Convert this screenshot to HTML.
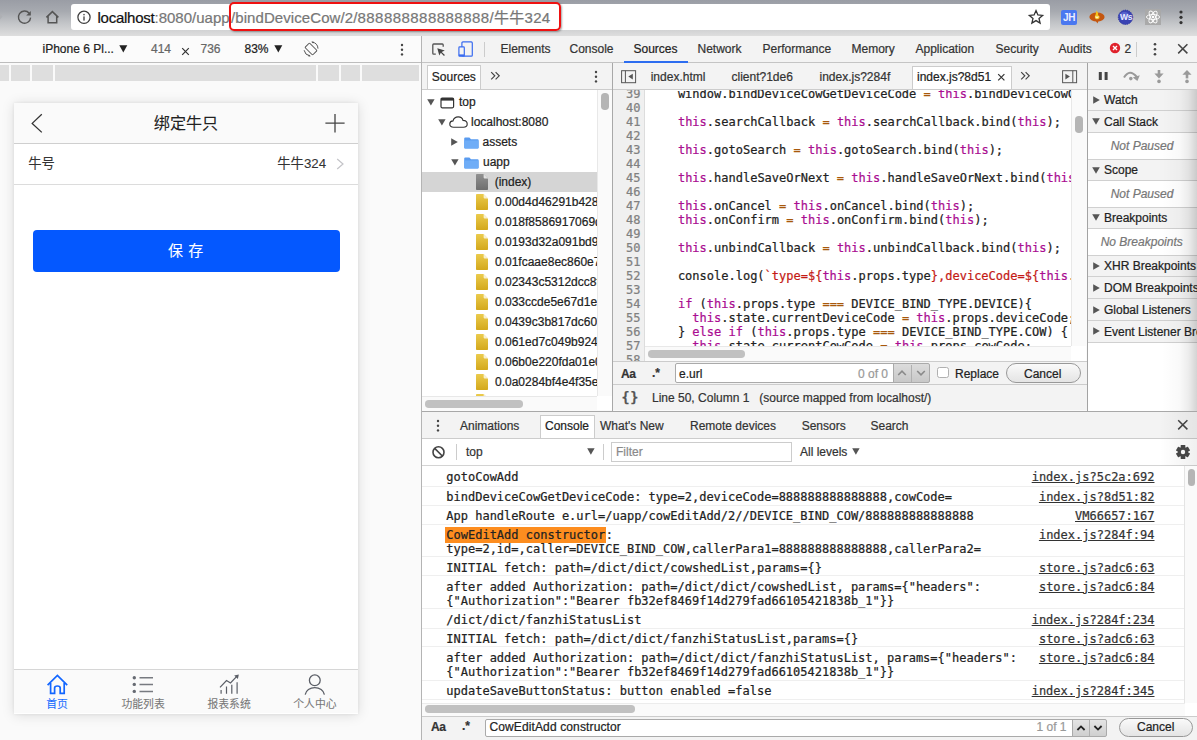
<!DOCTYPE html>
<html lang="zh">
<head>
<meta charset="utf-8">
<title>bindDeviceCow</title>
<style>
*{box-sizing:border-box;margin:0;padding:0}
html,body{width:1197px;height:740px;overflow:hidden;background:#fafafa}
body{position:relative;font-family:"Liberation Sans","Noto Sans CJK SC",sans-serif;font-size:13px;color:#222;-webkit-font-smoothing:antialiased;-webkit-text-stroke:.22px}
.a{position:absolute}
.t{position:absolute;white-space:nowrap;line-height:1}
.m{font-family:"DejaVu Sans Mono","Liberation Mono",monospace;font-size:12px}
svg{position:absolute;overflow:visible}
/* top chrome */
#chrome{left:0;top:0;width:1197px;height:36.6px;background:linear-gradient(#9a9da5 0,#a7aab0 32%,#c4c6c9 66%,#dedede 100%);border-bottom:1.2px solid #a8a8a8}
#url{left:71px;top:4px;width:979px;height:26px;background:#fff;border-radius:3px}
#redbox{left:229px;top:2px;width:332px;height:29px;border:2px solid #ee1111;border-radius:5px;box-shadow:1px 1px 2px rgba(0,0,0,.35)}
/* device toolbar */
#devbar{left:0;top:36px;width:421px;height:26.8px;background:#fbfbfb;border-bottom:1px solid #bdbdbd}
#dtbar{left:421.5px;top:36px;width:776px;height:26.8px;background:#f3f3f3;border-bottom:1px solid #c4c4c4}
#vsplit{left:420.8px;top:36px;width:1px;height:704px;background:#b4b4b4}
.cl{position:absolute;left:36.5px;margin:0;font-family:"DejaVu Sans Mono","Liberation Mono",monospace;font-size:12px;line-height:14px;color:#222;white-space:pre}
.cl b{font-weight:normal}
.k{color:#aa0d91}.o{color:#a8580c}.s{color:#c41a16}
.cm{position:absolute;margin:0;font-family:"DejaVu Sans Mono","Liberation Mono",monospace;font-size:12px;line-height:14px;color:#222;white-space:pre}
.cm b{font-weight:normal}
.hl{background:#fd8d1f;padding:.8px 0.5px 1.2px 1px;margin-left:-1px}
.lk{color:#333;text-decoration:underline}
</style>
</head>
<body>
<div id="chrome" class="a"></div>
<div id="url" class="a"></div>
<div id="devbar" class="a"></div>
<div id="dtbar" class="a"></div>
<div id="vsplit" class="a"></div>
<!-- top chrome icons -->
<svg class="a" style="left:0;top:0" width="70" height="36" viewBox="0 0 70 36">
<path d="M0 13.5 L2.6 16.6 L0 19.5 Z" fill="#aeb0b4"/>
<path d="M29.2 13.2 A6.1 6.1 0 1 0 30.6 17.6" fill="none" stroke="#555" stroke-width="1.4"/>
<path d="M26.2 15.6 L30.8 15.6 L30.8 11 Z" fill="#555"/>
<path d="M46.4 17.4 L52.4 11.6 L58.4 17.4 M48.1 16.2 V22.8 H56.7 V16.2" fill="none" stroke="#555" stroke-width="1.5"/>
</svg>
<svg class="a" style="left:76px;top:9px" width="16" height="16" viewBox="0 0 16 16">
<circle cx="8" cy="8.3" r="6.1" fill="none" stroke="#3c3c3c" stroke-width="1.25"/>
<rect x="7.35" y="7.4" width="1.3" height="4.2" fill="#3c3c3c"/><rect x="7.35" y="4.9" width="1.3" height="1.4" fill="#3c3c3c"/>
</svg>
<span class="t" style="left:97.5px;top:10px;font-size:15px;color:#111;letter-spacing:-.26px">localhost</span>
<span class="t" style="left:154.5px;top:10px;font-size:15px;color:#777">:8080/uapp</span>
<span class="t" style="left:231px;top:10px;font-size:15px;color:#777;letter-spacing:.08px">/bindDeviceCow/2/</span>
<span class="t" style="left:357.5px;top:10px;font-size:15px;color:#777;letter-spacing:.46px">888888888888888</span>
<span class="t" style="left:489.5px;top:10px;font-size:15px;color:#777;letter-spacing:.3px">/牛牛324</span>
<div id="redbox" class="a"></div>
<!-- star -->
<svg class="a" style="left:1028px;top:9px" width="16" height="16" viewBox="0 0 16 16"><path d="M8 1.6 L9.9 6 L14.6 6.4 L11 9.5 L12.1 14.1 L8 11.6 L3.9 14.1 L5 9.5 L1.4 6.4 L6.1 6 Z" fill="none" stroke="#333" stroke-width="1.3" stroke-linejoin="miter"/></svg>
<!-- extensions -->
<div class="a" style="left:1061px;top:10px;width:16px;height:15px;background:#4a78f0;border-radius:2px"></div>
<span class="t" style="left:1063px;top:12.5px;font-size:10px;font-weight:bold;color:#eef;letter-spacing:-.2px;-webkit-text-stroke:0">JH</span>
<svg class="a" style="left:1088px;top:9px" width="18" height="16" viewBox="0 0 18 16"><ellipse cx="9" cy="8" rx="7.6" ry="4.6" fill="#c4560f"/><path d="M7.5 11.5 L9.5 14.5 L10.5 11.8Z" fill="#c4560f"/><path d="M8.5 1.5 Q11 4 10 6.5 Q12 6 11.5 9 Q10 11 7.8 10 Q6 8.5 7.5 6 Q8 4 8.5 1.5Z" fill="#f5c21a"/><path d="M7.2 6.5 L8.2 8 L9 6.8 L9.8 8 L10.8 6.5 L10.3 9.3 H7.7Z" fill="#fff3c0"/></svg>
<svg class="a" style="left:1117px;top:9px" width="17" height="17" viewBox="0 0 17 17"><circle cx="8.5" cy="8.3" r="7.2" fill="#3a43b3"/><circle cx="8.5" cy="8.3" r="7.2" fill="none" stroke="#2a32a0" stroke-width="1" stroke-dasharray="1.2 1"/><ellipse cx="7.5" cy="6.5" rx="4.5" ry="3.5" fill="#6a78e0" opacity=".6"/></svg>
<span class="t" style="left:1120px;top:13px;font-size:8.5px;font-weight:bold;color:#e8eaff;letter-spacing:-.3px;-webkit-text-stroke:0">Ws</span>
<div class="a" style="left:1145px;top:9px;width:16px;height:16px;background:#a9a9a9"></div>
<svg class="a" style="left:1145px;top:9px" width="16" height="16" viewBox="0 0 16 16"><g fill="none" stroke="#fff" stroke-width=".9"><ellipse cx="8" cy="8" rx="6.6" ry="2.5"/><ellipse cx="8" cy="8" rx="6.6" ry="2.5" transform="rotate(60 8 8)"/><ellipse cx="8" cy="8" rx="6.6" ry="2.5" transform="rotate(120 8 8)"/></g><circle cx="8" cy="8" r="1.3" fill="#fff"/></svg>
<svg class="a" style="left:1177px;top:9px" width="8" height="16" viewBox="0 0 8 16"><circle cx="4" cy="3" r="1.6" fill="#333"/><circle cx="4" cy="8.3" r="1.6" fill="#333"/><circle cx="4" cy="13.6" r="1.6" fill="#333"/></svg>

<!-- device toolbar -->
<span class="t" style="left:42.5px;top:43px;font-size:12px;color:#222">iPhone 6 Pl...</span>
<svg class="a" style="left:119px;top:45px" width="9" height="8" viewBox="0 0 9 8"><path d="M0.3 0.3 H8.3 L4.3 7.4Z" fill="#222"/></svg>
<span class="t" style="left:151px;top:43px;font-size:12px;color:#666">414</span>
<svg class="a" style="left:181px;top:47px" width="9" height="9" viewBox="0 0 9 9"><path d="M1.2 1.2 L7.8 7.8 M7.8 1.2 L1.2 7.8" stroke="#333" stroke-width="1.2" fill="none"/></svg>
<span class="t" style="left:200.5px;top:43px;font-size:12px;color:#666">736</span>
<span class="t" style="left:244.5px;top:43px;font-size:12px;color:#222">83%</span>
<svg class="a" style="left:274px;top:45px" width="9" height="8" viewBox="0 0 9 8"><path d="M0.3 0.3 H8.3 L4.3 7.4Z" fill="#222"/></svg>
<svg class="a" style="left:303.05px;top:40.85px" width="16" height="16" viewBox="-8 -8 16 16"><g fill="none" stroke="#555" stroke-width="1"><rect x="-5.4" y="-3.2" width="10.8" height="6.4" rx=".8" transform="rotate(45)"/><path d="M1.22 -6.89 A7 7 0 0 1 6.99 -0.37"/><path d="M-6.89 1.22 A7 7 0 0 0 -1.22 6.89"/></g><path d="M0.2 -7.2 L2.6 -7.6 L2.2 -5.4Z" fill="#555"/><path d="M-0.2 7.2 L-2.6 7.6 L-2.2 5.4Z" fill="#555"/></svg>
<svg class="a" style="left:399px;top:43px" width="6" height="14" viewBox="0 0 6 14"><circle cx="3" cy="2" r="1.2" fill="#444"/><circle cx="3" cy="6.7" r="1.2" fill="#444"/><circle cx="3" cy="11.4" r="1.2" fill="#444"/></svg>
<!-- ruler -->
<div class="a" style="left:0;top:65px;width:419px;height:15.7px;background:#dedede"></div>
<div class="a" style="left:9px;top:65px;width:2px;height:15.7px;background:#fafafa"></div>
<div class="a" style="left:30px;top:65px;width:2px;height:15.7px;background:#fafafa"></div>
<div class="a" style="left:53px;top:65px;width:2px;height:15.7px;background:#fafafa"></div>
<div class="a" style="left:316px;top:65px;width:2px;height:15.7px;background:#fafafa"></div>
<div class="a" style="left:339px;top:65px;width:2px;height:15.7px;background:#fafafa"></div>
<div class="a" style="left:360px;top:65px;width:2px;height:15.7px;background:#fafafa"></div>
<!-- devtools main toolbar -->
<svg class="a" style="left:431px;top:42px" width="16" height="16" viewBox="0 0 16 16"><path d="M12.2 4.8 V2.9 Q12.2 2 11.3 2 H2.7 Q1.8 2 1.8 2.9 V11.3 Q1.8 12.2 2.7 12.2 H4.8" fill="none" stroke="#555" stroke-width="1.3"/><path d="M6.3 6.3 L13.8 8.5 L10.7 9.9 L13.9 13.1 L13 14 L9.8 10.8 L8.3 13.6 Z" fill="#444"/></svg>
<svg class="a" style="left:457px;top:40px" width="17" height="18" viewBox="0 0 17 18"><rect x="4.9" y="1.9" width="10.4" height="14.3" rx="1" fill="none" stroke="#3a6cf0" stroke-width="1.2"/><rect x="1.9" y="6.9" width="5.4" height="9.3" rx=".8" fill="#f3f3f3" stroke="#3a6cf0" stroke-width="1.2"/><rect x="1.9" y="14.4" width="5.4" height="1.8" fill="#3a6cf0"/></svg>
<div class="a" style="left:484px;top:41.5px;width:1px;height:15.5px;background:#ccc"></div>
<span class="t" style="left:500.5px;top:43px;font-size:12px;color:#333">Elements</span>
<span class="t" style="left:569.5px;top:43px;font-size:12px;color:#333">Console</span>
<span class="t" style="left:633.5px;top:43px;font-size:12px;color:#222">Sources</span>
<div class="a" style="left:624px;top:61px;width:64px;height:2.2px;background:#2d6df0"></div>
<span class="t" style="left:697.5px;top:43px;font-size:12px;color:#333">Network</span>
<span class="t" style="left:762.5px;top:43px;font-size:12px;color:#333">Performance</span>
<span class="t" style="left:851.5px;top:43px;font-size:12px;color:#333">Memory</span>
<span class="t" style="left:915.5px;top:43px;font-size:12px;color:#333">Application</span>
<span class="t" style="left:995.5px;top:43px;font-size:12px;color:#333">Security</span>
<span class="t" style="left:1058.5px;top:43px;font-size:12px;color:#333">Audits</span>
<svg class="a" style="left:1109px;top:42px" width="12" height="12" viewBox="0 0 12 12"><circle cx="6" cy="6" r="5.2" fill="#e0222c"/><path d="M4 4 L8 8 M8 4 L4 8" stroke="#fff" stroke-width="1.4"/></svg>
<span class="t" style="left:1124.5px;top:43px;font-size:12px;color:#333">2</span>
<div class="a" style="left:1136px;top:42px;width:1px;height:15px;background:#ccc"></div>
<svg class="a" style="left:1152px;top:42px" width="6" height="15" viewBox="0 0 6 15"><circle cx="3" cy="2.2" r="1.3" fill="#444"/><circle cx="3" cy="7.2" r="1.3" fill="#444"/><circle cx="3" cy="12.2" r="1.3" fill="#444"/></svg>
<svg class="a" style="left:1177px;top:43.4px" width="12" height="12" viewBox="0 0 12 12"><path d="M1.2 1.2 L10.4 10.4 M10.4 1.2 L1.2 10.4" stroke="#444" stroke-width="1.5" fill="none"/></svg>

<!-- phone -->
<div class="a" style="left:14.2px;top:102.5px;width:343.5px;height:611px;background:#fff;box-shadow:0 1px 12px rgba(0,0,0,.13),0 0 3px rgba(0,0,0,.07)"></div>
<div class="a" style="left:14.2px;top:102.5px;width:343.5px;height:41px;background:#fafafa;border-bottom:1px solid #cfcfcf"></div>
<svg class="a" style="left:30px;top:112px" width="14" height="22" viewBox="0 0 14 22"><path d="M11.8 2.2 L2.2 11.4 L11.8 20.4" fill="none" stroke="#333" stroke-width="1.3"/></svg>
<span class="t" style="-webkit-text-stroke:.08px;left:153.8px;top:114.5px;font-size:16.1px;color:#222;font-family:'Liberation Sans','Noto Sans CJK SC',sans-serif">绑定牛只</span>
<svg class="a" style="left:325px;top:113px" width="20" height="20" viewBox="0 0 20 20"><path d="M0.4 10.2 H19.6 M10 1 V19.6" fill="none" stroke="#444" stroke-width="1.3"/></svg>
<span class="t" style="-webkit-text-stroke:.08px;left:28.3px;top:157px;font-size:13.3px;color:#333">牛号</span>
<span class="t" style="-webkit-text-stroke:.08px;left:277.3px;top:157px;font-size:13.3px;color:#333">牛牛324</span>
<svg class="a" style="left:336px;top:158px" width="9" height="12" viewBox="0 0 9 12"><path d="M1.2 1 L7 6 L1.2 11" fill="none" stroke="#c4c4c8" stroke-width="1.2"/></svg>
<div class="a" style="left:14.2px;top:183.5px;width:343.5px;height:1px;background:#dcdcdc"></div>
<div class="a" style="left:32.5px;top:230px;width:307px;height:41.5px;background:#0458ff;border-radius:4px"></div>
<span class="t" style="-webkit-text-stroke:.08px;left:168px;top:243px;font-size:15px;color:#fff;word-spacing:1px">保 存</span>
<!-- tabbar -->
<div class="a" style="left:14.2px;top:668.8px;width:343.5px;height:44.7px;background:#fafafa;border-top:1px solid #d6d6d6"></div>
<svg class="a" style="left:45px;top:672px" width="25" height="24" viewBox="0 0 25 24"><path d="M2.6 13.2 L12.4 3.4 L22.2 13.2 M5.6 11 V21.4 H9.6 V16 Q9.6 14 12.4 14 Q15.2 14 15.2 16 V21.4 H19.2 V11" fill="none" stroke="#1266ff" stroke-width="1.7" stroke-linejoin="miter"/></svg>
<span class="t" style="-webkit-text-stroke:.08px;left:46.3px;top:698.5px;font-size:10.8px;color:#1a6dff">首页</span>
<svg class="a" style="left:131px;top:674px" width="24" height="20" viewBox="0 0 24 20"><g fill="#666a72"><circle cx="3.3" cy="3.7" r="1.7"/><circle cx="3.3" cy="10.4" r="1.7"/><circle cx="3.3" cy="17.4" r="1.7"/></g><path d="M8.5 3.7 H22 M8.5 10.4 H22 M8.5 17.4 H22" stroke="#777a80" stroke-width="1.45"/></svg>
<span class="t" style="-webkit-text-stroke:.08px;left:121.5px;top:698.5px;font-size:10.8px;color:#777">功能列表</span>
<svg class="a" style="left:217px;top:672px" width="24" height="24" viewBox="0 0 24 24"><path d="M4.1 21.8 V18 M9.5 21.8 V14.5 M14.8 21.8 V12.8 M20.1 21.8 V10.3" stroke="#5a5e66" stroke-width="1.2" fill="none"/><path d="M3 15.3 L9.5 8.6 L13.5 11 L20 4.2" stroke="#5a5e66" stroke-width="1.2" fill="none"/><path d="M17.2 3.6 L21.8 2.4 L20.9 7 Z" fill="#5a5e66"/></svg>
<span class="t" style="-webkit-text-stroke:.08px;left:207.5px;top:698.5px;font-size:10.8px;color:#777">报表系统</span>
<svg class="a" style="left:303px;top:672px" width="24" height="24" viewBox="0 0 24 24"><circle cx="11.8" cy="8.3" r="5.4" fill="none" stroke="#5a5e66" stroke-width="1.3"/><path d="M2.2 22.6 A9.7 8.2 0 0 1 21.4 22.6" fill="none" stroke="#5a5e66" stroke-width="1.3"/></svg>
<span class="t" style="-webkit-text-stroke:.08px;left:293.3px;top:698.5px;font-size:10.8px;color:#777">个人中心</span>

<!-- navigator -->
<div class="a" style="left:421.5px;top:63px;width:190px;height:26.5px;background:#f3f3f3;border-bottom:1px solid #ccc"></div>
<div class="a" style="left:426.8px;top:65px;width:54.5px;height:23.6px;background:#fff;border:1px solid #ccc;border-bottom:none"></div>
<span class="t" style="left:431.8px;top:71px;font-size:12px;color:#222">Sources</span>
<svg class="a" style="left:490px;top:71px" width="11" height="10" viewBox="0 0 11 10"><path d="M1.2 1.2 L4.8 4.8 L1.2 8.4 M5.6 1.2 L9.2 4.8 L5.6 8.4" fill="none" stroke="#444" stroke-width="1.2"/></svg>
<svg class="a" style="left:593px;top:70px" width="6" height="14" viewBox="0 0 6 14"><circle cx="3" cy="2" r="1.2" fill="#444"/><circle cx="3" cy="6.7" r="1.2" fill="#444"/><circle cx="3" cy="11.4" r="1.2" fill="#444"/></svg>
<div class="a" id="tree" style="left:422px;top:90px;width:175px;height:305.5px;background:#fff;overflow:hidden">
<svg class="a" style="left:4.5px;top:8.599999999999994px" width="8" height="7" viewBox="0 0 8 7"><path d="M0.2 0.2 H7.6 L3.9 6.6Z" fill="#555"/></svg>
<svg class="a" style="left:17.5px;top:6.5px" width="15" height="12" viewBox="0 0 15 12"><rect x="1" y="1" width="12.6" height="9.8" rx="1.2" fill="none" stroke="#333" stroke-width="1.2"/><rect x="1" y="1" width="12.6" height="2.6" fill="#333"/></svg>
<span class="t" style="left:37px;top:5.5px;font-size:12px;color:#222">top</span>
<svg class="a" style="left:16.30000000000001px;top:28.599999999999994px" width="8" height="7" viewBox="0 0 8 7"><path d="M0.2 0.2 H7.6 L3.9 6.6Z" fill="#555"/></svg>
<svg class="a" style="left:27px;top:26px" width="19" height="12" viewBox="0 0 19 12"><path d="M4.6 11.2 Q0.8 11.2 0.8 8 Q0.8 5.2 4 4.9 Q5 0.8 9.2 0.8 Q13.2 0.8 14 4.4 Q18.2 4.6 18.2 8 Q18.2 11.2 14.4 11.2 Z" fill="#fff" stroke="#333" stroke-width="1.15"/></svg>
<span class="t" style="left:49px;top:25.5px;font-size:12px;color:#222">localhost:8080</span>
<svg class="a" style="left:29.30000000000001px;top:48px" width="7" height="8" viewBox="0 0 7 8"><path d="M0.2 0.2 V7.8 L6.8 4Z" fill="#555"/></svg>
<svg class="a" style="left:42px;top:47px" width="15" height="12" viewBox="0 0 15 12"><path d="M0.2 1.4 Q0.2 0.4 1.2 0.4 H5.4 L7 2.2 H13.6 Q14.6 2.2 14.6 3.2 V10.6 Q14.6 11.6 13.6 11.6 H1.2 Q0.2 11.6 0.2 10.6Z" fill="#5a9cf0"/><path d="M0.2 3.4 H14.6 V10.6 Q14.6 11.6 13.6 11.6 H1.2 Q0.2 11.6 0.2 10.6Z" fill="#6fadf7"/></svg>
<span class="t" style="left:60.5px;top:45.5px;font-size:12px;color:#222">assets</span>
<svg class="a" style="left:28.80000000000001px;top:68.6px" width="8" height="7" viewBox="0 0 8 7"><path d="M0.2 0.2 H7.6 L3.9 6.6Z" fill="#555"/></svg>
<svg class="a" style="left:42px;top:67px" width="15" height="12" viewBox="0 0 15 12"><path d="M0.2 1.4 Q0.2 0.4 1.2 0.4 H5.4 L7 2.2 H13.6 Q14.6 2.2 14.6 3.2 V10.6 Q14.6 11.6 13.6 11.6 H1.2 Q0.2 11.6 0.2 10.6Z" fill="#5a9cf0"/><path d="M0.2 3.4 H14.6 V10.6 Q14.6 11.6 13.6 11.6 H1.2 Q0.2 11.6 0.2 10.6Z" fill="#6fadf7"/></svg>
<span class="t" style="left:61px;top:65.5px;font-size:12px;color:#222">uapp</span>
<div class="a" style="left:0;top:82px;width:175px;height:19.7px;background:#d5d5d5"></div>
<svg class="a" style="left:54px;top:84px" width="12" height="16" viewBox="0 0 12 16"><defs><linearGradient id="gf" x1="0" y1="0" x2="0" y2="1"><stop offset="0" stop-color="#909090"/><stop offset="1" stop-color="#6e6e6e"/></linearGradient></defs><path d="M0.8 0 H7.6 L12 4.4 V15.2 Q12 16 11.2 16 H0.8 Q0 16 0 15.2 V0.8 Q0 0 0.8 0Z" fill="url(#gf)"/><path d="M7.6 0 L12 4.4 H8.4 Q7.6 4.4 7.6 3.6Z" fill="#fff" opacity=".75"/></svg>
<span class="t" style="left:72.69999999999999px;top:85.5px;font-size:12px;color:#222">(index)</span>
<svg class="a" style="left:54px;top:104px" width="12" height="16" viewBox="0 0 12 16"><defs><linearGradient id="gy0" x1="0" y1="0" x2="0" y2="1"><stop offset="0" stop-color="#ebcb4c"/><stop offset="1" stop-color="#d3a81c"/></linearGradient></defs><path d="M0.8 0 H7.6 L12 4.4 V15.2 Q12 16 11.2 16 H0.8 Q0 16 0 15.2 V0.8 Q0 0 0.8 0Z" fill="url(#gy0)"/><path d="M7.6 0 L12 4.4 H8.4 Q7.6 4.4 7.6 3.6Z" fill="#fff" opacity=".75"/></svg>
<span class="t" style="left:73px;top:105.5px;font-size:12px;color:#222">0.00d4d46291b428a5</span>
<svg class="a" style="left:54px;top:124px" width="12" height="16" viewBox="0 0 12 16"><defs><linearGradient id="gy1" x1="0" y1="0" x2="0" y2="1"><stop offset="0" stop-color="#ebcb4c"/><stop offset="1" stop-color="#d3a81c"/></linearGradient></defs><path d="M0.8 0 H7.6 L12 4.4 V15.2 Q12 16 11.2 16 H0.8 Q0 16 0 15.2 V0.8 Q0 0 0.8 0Z" fill="url(#gy1)"/><path d="M7.6 0 L12 4.4 H8.4 Q7.6 4.4 7.6 3.6Z" fill="#fff" opacity=".75"/></svg>
<span class="t" style="left:73px;top:125.5px;font-size:12px;color:#222">0.018f8586917069d3</span>
<svg class="a" style="left:54px;top:144px" width="12" height="16" viewBox="0 0 12 16"><defs><linearGradient id="gy2" x1="0" y1="0" x2="0" y2="1"><stop offset="0" stop-color="#ebcb4c"/><stop offset="1" stop-color="#d3a81c"/></linearGradient></defs><path d="M0.8 0 H7.6 L12 4.4 V15.2 Q12 16 11.2 16 H0.8 Q0 16 0 15.2 V0.8 Q0 0 0.8 0Z" fill="url(#gy2)"/><path d="M7.6 0 L12 4.4 H8.4 Q7.6 4.4 7.6 3.6Z" fill="#fff" opacity=".75"/></svg>
<span class="t" style="left:73px;top:145.5px;font-size:12px;color:#222">0.0193d32a091bd92</span>
<svg class="a" style="left:54px;top:164px" width="12" height="16" viewBox="0 0 12 16"><defs><linearGradient id="gy3" x1="0" y1="0" x2="0" y2="1"><stop offset="0" stop-color="#ebcb4c"/><stop offset="1" stop-color="#d3a81c"/></linearGradient></defs><path d="M0.8 0 H7.6 L12 4.4 V15.2 Q12 16 11.2 16 H0.8 Q0 16 0 15.2 V0.8 Q0 0 0.8 0Z" fill="url(#gy3)"/><path d="M7.6 0 L12 4.4 H8.4 Q7.6 4.4 7.6 3.6Z" fill="#fff" opacity=".75"/></svg>
<span class="t" style="left:73px;top:165.5px;font-size:12px;color:#222">0.01fcaae8ec860e7b</span>
<svg class="a" style="left:54px;top:184px" width="12" height="16" viewBox="0 0 12 16"><defs><linearGradient id="gy4" x1="0" y1="0" x2="0" y2="1"><stop offset="0" stop-color="#ebcb4c"/><stop offset="1" stop-color="#d3a81c"/></linearGradient></defs><path d="M0.8 0 H7.6 L12 4.4 V15.2 Q12 16 11.2 16 H0.8 Q0 16 0 15.2 V0.8 Q0 0 0.8 0Z" fill="url(#gy4)"/><path d="M7.6 0 L12 4.4 H8.4 Q7.6 4.4 7.6 3.6Z" fill="#fff" opacity=".75"/></svg>
<span class="t" style="left:73px;top:185.5px;font-size:12px;color:#222">0.02343c5312dcc8f</span>
<svg class="a" style="left:54px;top:204px" width="12" height="16" viewBox="0 0 12 16"><defs><linearGradient id="gy5" x1="0" y1="0" x2="0" y2="1"><stop offset="0" stop-color="#ebcb4c"/><stop offset="1" stop-color="#d3a81c"/></linearGradient></defs><path d="M0.8 0 H7.6 L12 4.4 V15.2 Q12 16 11.2 16 H0.8 Q0 16 0 15.2 V0.8 Q0 0 0.8 0Z" fill="url(#gy5)"/><path d="M7.6 0 L12 4.4 H8.4 Q7.6 4.4 7.6 3.6Z" fill="#fff" opacity=".75"/></svg>
<span class="t" style="left:73px;top:205.5px;font-size:12px;color:#222">0.033ccde5e67d1ea</span>
<svg class="a" style="left:54px;top:224px" width="12" height="16" viewBox="0 0 12 16"><defs><linearGradient id="gy6" x1="0" y1="0" x2="0" y2="1"><stop offset="0" stop-color="#ebcb4c"/><stop offset="1" stop-color="#d3a81c"/></linearGradient></defs><path d="M0.8 0 H7.6 L12 4.4 V15.2 Q12 16 11.2 16 H0.8 Q0 16 0 15.2 V0.8 Q0 0 0.8 0Z" fill="url(#gy6)"/><path d="M7.6 0 L12 4.4 H8.4 Q7.6 4.4 7.6 3.6Z" fill="#fff" opacity=".75"/></svg>
<span class="t" style="left:73px;top:225.5px;font-size:12px;color:#222">0.0439c3b817dc60b</span>
<svg class="a" style="left:54px;top:244px" width="12" height="16" viewBox="0 0 12 16"><defs><linearGradient id="gy7" x1="0" y1="0" x2="0" y2="1"><stop offset="0" stop-color="#ebcb4c"/><stop offset="1" stop-color="#d3a81c"/></linearGradient></defs><path d="M0.8 0 H7.6 L12 4.4 V15.2 Q12 16 11.2 16 H0.8 Q0 16 0 15.2 V0.8 Q0 0 0.8 0Z" fill="url(#gy7)"/><path d="M7.6 0 L12 4.4 H8.4 Q7.6 4.4 7.6 3.6Z" fill="#fff" opacity=".75"/></svg>
<span class="t" style="left:73px;top:245.5px;font-size:12px;color:#222">0.061ed7c049b924c</span>
<svg class="a" style="left:54px;top:264px" width="12" height="16" viewBox="0 0 12 16"><defs><linearGradient id="gy8" x1="0" y1="0" x2="0" y2="1"><stop offset="0" stop-color="#ebcb4c"/><stop offset="1" stop-color="#d3a81c"/></linearGradient></defs><path d="M0.8 0 H7.6 L12 4.4 V15.2 Q12 16 11.2 16 H0.8 Q0 16 0 15.2 V0.8 Q0 0 0.8 0Z" fill="url(#gy8)"/><path d="M7.6 0 L12 4.4 H8.4 Q7.6 4.4 7.6 3.6Z" fill="#fff" opacity=".75"/></svg>
<span class="t" style="left:73px;top:265.5px;font-size:12px;color:#222">0.06b0e220fda01e0</span>
<svg class="a" style="left:54px;top:284px" width="12" height="16" viewBox="0 0 12 16"><defs><linearGradient id="gy9" x1="0" y1="0" x2="0" y2="1"><stop offset="0" stop-color="#ebcb4c"/><stop offset="1" stop-color="#d3a81c"/></linearGradient></defs><path d="M0.8 0 H7.6 L12 4.4 V15.2 Q12 16 11.2 16 H0.8 Q0 16 0 15.2 V0.8 Q0 0 0.8 0Z" fill="url(#gy9)"/><path d="M7.6 0 L12 4.4 H8.4 Q7.6 4.4 7.6 3.6Z" fill="#fff" opacity=".75"/></svg>
<span class="t" style="left:73px;top:285.5px;font-size:12px;color:#222">0.0a0284bf4e4f35e1</span>
<svg class="a" style="left:54px;top:304px" width="12" height="16" viewBox="0 0 12 16"><defs><linearGradient id="gy10" x1="0" y1="0" x2="0" y2="1"><stop offset="0" stop-color="#ebcb4c"/><stop offset="1" stop-color="#d3a81c"/></linearGradient></defs><path d="M0.8 0 H7.6 L12 4.4 V15.2 Q12 16 11.2 16 H0.8 Q0 16 0 15.2 V0.8 Q0 0 0.8 0Z" fill="url(#gy10)"/><path d="M7.6 0 L12 4.4 H8.4 Q7.6 4.4 7.6 3.6Z" fill="#fff" opacity=".75"/></svg>
<span class="t" style="left:73px;top:305.5px;font-size:12px;color:#222">0.0a7f3c9e12b44d0</span>
</div>
<div class="a" style="left:597px;top:90px;width:14.5px;height:305.5px;background:#fafafa;border-left:1px solid #e8e8e8"></div>
<div class="a" style="left:601px;top:93px;width:7.5px;height:16.5px;background:#b5b5b5;border-radius:3.75px"></div>
<div class="a" style="left:422px;top:395.5px;width:175px;height:14px;background:#fafafa;border-top:1px solid #e8e8e8"></div>
<div class="a" style="left:597px;top:395.5px;width:14.5px;height:14px;background:#fff"></div>
<div class="a" style="left:425px;top:400px;width:98px;height:7.5px;background:#c1c1c1;border-radius:3.75px"></div>
<div class="a" style="left:611.8px;top:63px;width:1px;height:347.5px;background:#a8a8a8"></div>
<!-- editor tabs -->
<div class="a" style="left:612.5px;top:63px;width:474px;height:26.5px;background:#f3f3f3;border-bottom:1px solid #ccc"></div>
<svg class="a" style="left:620px;top:70px" width="17" height="14" viewBox="0 0 17 14"><rect x="1.6" y="0.7" width="14" height="12" fill="none" stroke="#555" stroke-width="1"/><path d="M5.4 0.7 V12.7" stroke="#555" stroke-width="1"/><path d="M12.8 3.8 V9.5 L8.3 6.6Z" fill="#555"/></svg>
<span class="t" style="left:650.7px;top:71px;font-size:12px;color:#333">index.html</span>
<span class="t" style="left:731.5px;top:71px;font-size:12px;color:#333">client?1de6</span>
<span class="t" style="left:819.5px;top:71px;font-size:12px;color:#333">index.js?284f</span>
<div class="a" style="left:912px;top:65.5px;width:100px;height:23.1px;background:#fff;border:1px solid #ccc;border-bottom:none"></div>
<span class="t" style="left:917px;top:71px;font-size:12px;color:#222">index.js?8d51</span>
<svg class="a" style="left:997px;top:73px" width="9" height="9" viewBox="0 0 9 9"><path d="M1.2 1.2 L7.4 7.4 M7.4 1.2 L1.2 7.4" stroke="#333" stroke-width="1.2" fill="none"/></svg>
<svg class="a" style="left:1019.5px;top:71px" width="11" height="10" viewBox="0 0 11 10"><path d="M1.2 1.2 L4.8 4.8 L1.2 8.4 M5.6 1.2 L9.2 4.8 L5.6 8.4" fill="none" stroke="#444" stroke-width="1.2"/></svg>
<svg class="a" style="left:1060.5px;top:70px" width="17" height="14" viewBox="0 0 17 14"><rect x="1.6" y="0.7" width="14" height="12" fill="none" stroke="#555" stroke-width="1"/><path d="M11.8 0.7 V12.7" stroke="#555" stroke-width="1"/><path d="M4.4 3.8 V9.5 L8.9 6.6Z" fill="#555"/></svg>
<div class="a" id="code" style="left:612.5px;top:90px;width:458.5px;height:255.5px;background:#fff;overflow:hidden">
<pre class="cl" style="top:-2.8px">    window.bindDeviceCowGetDeviceCode <b class="o">=</b> <b class="k">this</b>.bindDeviceCowGetDeviceCode.bind(<b class="k">this</b>);</pre>
<pre class="cl" style="top:25.2px">    <b class="k">this</b>.searchCallback <b class="o">=</b> <b class="k">this</b>.searchCallback.bind(<b class="k">this</b>);</pre>
<pre class="cl" style="top:53.2px">    <b class="k">this</b>.gotoSearch <b class="o">=</b> <b class="k">this</b>.gotoSearch.bind(<b class="k">this</b>);</pre>
<pre class="cl" style="top:81.2px">    <b class="k">this</b>.handleSaveOrNext <b class="o">=</b> <b class="k">this</b>.handleSaveOrNext.bind(<b class="k">this</b>);</pre>
<pre class="cl" style="top:109.2px">    <b class="k">this</b>.onCancel <b class="o">=</b> <b class="k">this</b>.onCancel.bind(<b class="k">this</b>);</pre>
<pre class="cl" style="top:123.2px">    <b class="k">this</b>.onConfirm <b class="o">=</b> <b class="k">this</b>.onConfirm.bind(<b class="k">this</b>);</pre>
<pre class="cl" style="top:151.2px">    <b class="k">this</b>.unbindCallback <b class="o">=</b> <b class="k">this</b>.unbindCallback.bind(<b class="k">this</b>);</pre>
<pre class="cl" style="top:179.2px">    console.log(<b class="s">`type=${</b><b class="k">this</b>.props.type<b class="s">},deviceCode=${</b><b class="k">this</b>.props.deviceCode<b class="s">},cowCode=${</b><b class="k">this</b>.props.cowCode<b class="s">}`</b>);</pre>
<pre class="cl" style="top:207.2px">    <b class="k">if</b> (<b class="k">this</b>.props.type <b class="o">===</b> DEVICE_BIND_TYPE.DEVICE){</pre>
<pre class="cl" style="top:221.2px">      <b class="k">this</b>.state.currentDeviceCode <b class="o">=</b> <b class="k">this</b>.props.deviceCode;</pre>
<pre class="cl" style="top:235.2px">    } <b class="k">else</b> <b class="k">if</b> (<b class="k">this</b>.props.type <b class="o">===</b> DEVICE_BIND_TYPE.COW) {</pre>
<pre class="cl" style="top:249.2px">      <b class="k">this</b>.state.currentCowCode <b class="o">=</b> <b class="k">this</b>.props.cowCode;</pre>
</div>
<div class="a" id="gut" style="left:612.5px;top:90px;width:32.5px;height:271px;background:#f0f0f0;border-right:1px solid #ddd;overflow:hidden">
<span class="t m" style="right:3.5px;top:-1.8px;color:#808080">39</span>
<span class="t m" style="right:3.5px;top:12.2px;color:#808080">40</span>
<span class="t m" style="right:3.5px;top:26.2px;color:#808080">41</span>
<span class="t m" style="right:3.5px;top:40.2px;color:#808080">42</span>
<span class="t m" style="right:3.5px;top:54.2px;color:#808080">43</span>
<span class="t m" style="right:3.5px;top:68.2px;color:#808080">44</span>
<span class="t m" style="right:3.5px;top:82.2px;color:#808080">45</span>
<span class="t m" style="right:3.5px;top:96.2px;color:#808080">46</span>
<span class="t m" style="right:3.5px;top:110.2px;color:#808080">47</span>
<span class="t m" style="right:3.5px;top:124.2px;color:#808080">48</span>
<span class="t m" style="right:3.5px;top:138.2px;color:#808080">49</span>
<span class="t m" style="right:3.5px;top:152.2px;color:#808080">50</span>
<span class="t m" style="right:3.5px;top:166.2px;color:#808080">51</span>
<span class="t m" style="right:3.5px;top:180.2px;color:#808080">52</span>
<span class="t m" style="right:3.5px;top:194.2px;color:#808080">53</span>
<span class="t m" style="right:3.5px;top:208.2px;color:#808080">54</span>
<span class="t m" style="right:3.5px;top:222.2px;color:#808080">55</span>
<span class="t m" style="right:3.5px;top:236.2px;color:#808080">56</span>
<span class="t m" style="right:3.5px;top:250.2px;color:#808080">57</span>
<span class="t m" style="right:3.5px;top:264.2px;color:#808080">58</span>
</div>
<div class="a" style="left:1071px;top:90px;width:15px;height:255.5px;background:#fafafa;border-left:1px solid #e8e8e8"></div>
<div class="a" style="left:1075px;top:116px;width:7.5px;height:16.5px;background:#b5b5b5;border-radius:3.75px"></div>
<div class="a" style="left:645px;top:345.5px;width:426px;height:15.5px;background:#fafafa;border-top:1px solid #e8e8e8"></div>
<div class="a" style="left:1071px;top:345.5px;width:15px;height:15.5px;background:#fff"></div>
<div class="a" style="left:648px;top:350px;width:97px;height:7.5px;background:#c1c1c1;border-radius:3.75px"></div>
<!-- editor search bar -->
<div class="a" style="left:612.5px;top:361px;width:474px;height:23.5px;background:#f3f3f3;border-top:1px solid #ccc"></div>
<span class="t" style="left:621px;top:368px;font-size:12px;font-weight:bold;color:#333;letter-spacing:-.3px">Aa</span>
<span class="t" style="left:652px;top:367px;font-size:12px;font-weight:bold;color:#333">.*</span>
<div class="a" style="left:675px;top:363px;width:220px;height:19.5px;background:#fff;border:1px solid #aaa;border-radius:2px 0 0 2px"></div>
<span class="t" style="left:679px;top:368px;font-size:12px;color:#222">e.url</span>
<span class="t" style="left:858px;top:368px;font-size:12px;color:#999">0 of 0</span>
<div class="a" style="left:892.5px;top:363px;width:37.5px;height:19.5px;background:linear-gradient(#dcdcdc,#c8c8c8);border:1px solid #aaa;border-radius:0 2px 2px 0"></div>
<div class="a" style="left:911px;top:364.5px;width:1px;height:17px;background:#b0b0b0"></div>
<svg class="a" style="left:897px;top:369px" width="10" height="8" viewBox="0 0 10 8"><path d="M1.2 6 L5 2.2 L8.8 6" fill="none" stroke="#8a8a8a" stroke-width="1.6"/></svg>
<svg class="a" style="left:916px;top:369px" width="10" height="8" viewBox="0 0 10 8"><path d="M1.2 2 L5 5.8 L8.8 2" fill="none" stroke="#8a8a8a" stroke-width="1.6"/></svg>
<div class="a" style="left:937px;top:366.5px;width:11.5px;height:11.5px;background:#fff;border:1px solid #b0b0b0;border-radius:2.5px"></div>
<span class="t" style="left:955px;top:368px;font-size:12px;color:#222">Replace</span>
<div class="a" style="left:1005.5px;top:363px;width:75px;height:19.5px;background:linear-gradient(#fafafa,#e4e4e4);border:1px solid #989898;border-radius:10px"></div>
<span class="t" style="left:1024px;top:368px;font-size:12px;color:#222">Cancel</span>
<!-- status bar -->
<div class="a" style="left:612.5px;top:383.7px;width:474px;height:26.8px;background:#f3f3f3;border-top:1px solid #ccc"></div>
<span class="t m" style="left:621.5px;top:391px;font-size:13.5px;font-weight:bold;color:#555;letter-spacing:.6px">{}</span>
<span class="t" style="left:652px;top:392.3px;font-size:12px;color:#333">Line 50, Column 1</span>
<span class="t" style="left:759.3px;top:392.3px;font-size:12px;color:#333">(source mapped from localhost/)</span>
<!-- debugger pane -->
<div class="a" style="left:1086.5px;top:63px;width:111px;height:347.5px;background:#fff;border-left:1px solid #a3a3a3"></div>
<div class="a" style="left:1087.5px;top:63px;width:110px;height:26.5px;background:#f3f3f3;border-bottom:1px solid #ccc"></div>
<svg class="a" style="left:1087px;top:63px" width="110" height="26" viewBox="0 0 110 26"><rect x="11.8" y="9" width="3" height="8" fill="#444"/><rect x="17.6" y="9" width="3" height="8" fill="#444"/><path d="M37 14.6 Q42.6 5.2 49.8 14" fill="none" stroke="#9a9a9a" stroke-width="2"/><path d="M45.8 14.6 L52.8 12.2 L50.4 18Z" fill="#9a9a9a"/><circle cx="43.8" cy="15.6" r="1.8" fill="#9a9a9a"/><path d="M72 7 V12" stroke="#9a9a9a" stroke-width="2.6"/><path d="M67.4 10.6 H76.6 L72 15.4Z" fill="#9a9a9a"/><circle cx="72" cy="18.4" r="1.8" fill="#9a9a9a"/><path d="M100 15.4 V10.5" stroke="#9a9a9a" stroke-width="2.6"/><path d="M95.4 11.8 H104.6 L100 7Z" fill="#9a9a9a"/><circle cx="100" cy="18.4" r="1.8" fill="#9a9a9a"/></svg>
<div class="a" style="left:1087.5px;top:89.5px;width:110px;height:21.5px;background:#f3f3f3;border-bottom:1px solid #d0d0d0"></div>
<svg class="a" style="left:1092.6px;top:95.5px" width="7" height="8" viewBox="0 0 7 8"><path d="M0.2 0.2 V7.8 L6.8 4Z" fill="#555"/></svg>
<span class="t" style="left:1104px;top:93.6px;font-size:12px;color:#222">Watch</span>
<div class="a" style="left:1087.5px;top:111px;width:110px;height:21.5px;background:#f3f3f3;border-bottom:1px solid #d0d0d0"></div>
<svg class="a" style="left:1092px;top:118.2px" width="8" height="7" viewBox="0 0 8 7"><path d="M0.2 0.2 H7.8 L4 6.8Z" fill="#555"/></svg>
<span class="t" style="left:1104px;top:115.5px;font-size:12px;color:#222">Call Stack</span>
<div class="a" style="left:1087.5px;top:132.5px;width:110px;height:27.0px;background:#fff;border-bottom:1px solid #d0d0d0"></div>
<span class="t" style="left:1110.7px;top:139.9px;font-size:12px;font-style:italic;color:#777">Not Paused</span>
<div class="a" style="left:1087.5px;top:159.5px;width:110px;height:21.0px;background:#f3f3f3;border-bottom:1px solid #d0d0d0"></div>
<svg class="a" style="left:1092px;top:166.8px" width="8" height="7" viewBox="0 0 8 7"><path d="M0.2 0.2 H7.8 L4 6.8Z" fill="#555"/></svg>
<span class="t" style="left:1104px;top:164.1px;font-size:12px;color:#222">Scope</span>
<div class="a" style="left:1087.5px;top:180.5px;width:110px;height:27.0px;background:#fff;border-bottom:1px solid #d0d0d0"></div>
<span class="t" style="left:1110.7px;top:187.9px;font-size:12px;font-style:italic;color:#777">Not Paused</span>
<div class="a" style="left:1087.5px;top:207.5px;width:110px;height:21.0px;background:#f3f3f3;border-bottom:1px solid #d0d0d0"></div>
<svg class="a" style="left:1092px;top:214.4px" width="8" height="7" viewBox="0 0 8 7"><path d="M0.2 0.2 H7.8 L4 6.8Z" fill="#555"/></svg>
<span class="t" style="left:1104px;top:211.7px;font-size:12px;color:#222">Breakpoints</span>
<div class="a" style="left:1087.5px;top:228.5px;width:110px;height:27.0px;background:#fff;border-bottom:1px solid #d0d0d0"></div>
<span class="t" style="left:1100.7px;top:236.0px;font-size:12px;font-style:italic;color:#777">No Breakpoints</span>
<div class="a" style="left:1087.5px;top:255.5px;width:110px;height:21.5px;background:#f3f3f3;border-bottom:1px solid #d0d0d0"></div>
<svg class="a" style="left:1092.6px;top:261.6px" width="7" height="8" viewBox="0 0 7 8"><path d="M0.2 0.2 V7.8 L6.8 4Z" fill="#555"/></svg>
<span class="t" style="left:1104px;top:259.7px;font-size:12px;color:#222">XHR Breakpoints</span>
<div class="a" style="left:1087.5px;top:277px;width:110px;height:22px;background:#f3f3f3;border-bottom:1px solid #d0d0d0"></div>
<svg class="a" style="left:1092.6px;top:283.9px" width="7" height="8" viewBox="0 0 7 8"><path d="M0.2 0.2 V7.8 L6.8 4Z" fill="#555"/></svg>
<span class="t" style="left:1104px;top:282.0px;font-size:12px;color:#222">DOM Breakpoints</span>
<div class="a" style="left:1087.5px;top:299px;width:110px;height:22px;background:#f3f3f3;border-bottom:1px solid #d0d0d0"></div>
<svg class="a" style="left:1092.6px;top:305.6px" width="7" height="8" viewBox="0 0 7 8"><path d="M0.2 0.2 V7.8 L6.8 4Z" fill="#555"/></svg>
<span class="t" style="left:1104px;top:303.7px;font-size:12px;color:#222">Global Listeners</span>
<div class="a" style="left:1087.5px;top:321px;width:110px;height:22px;background:#f3f3f3;border-bottom:1px solid #d0d0d0"></div>
<svg class="a" style="left:1092.6px;top:327.4px" width="7" height="8" viewBox="0 0 7 8"><path d="M0.2 0.2 V7.8 L6.8 4Z" fill="#555"/></svg>
<span class="t" style="left:1104px;top:325.5px;font-size:12px;color:#222">Event Listener Breakpoints</span>
<div class="a" style="left:1162px;top:89.5px;width:35px;height:321px;background:linear-gradient(90deg,rgba(0,0,0,0),rgba(0,0,0,.025) 50%,rgba(0,0,0,.07) 75%,rgba(0,0,0,.17))"></div>
<!-- drawer -->
<div class="a" style="left:421.5px;top:410.5px;width:776px;height:28px;background:#f3f3f3;border-top:1px solid #a8a8a8;border-bottom:1px solid #ccc"></div>
<svg class="a" style="left:435px;top:419px" width="6" height="14" viewBox="0 0 6 14"><circle cx="3" cy="2" r="1.2" fill="#444"/><circle cx="3" cy="6.7" r="1.2" fill="#444"/><circle cx="3" cy="11.4" r="1.2" fill="#444"/></svg>
<span class="t" style="left:460px;top:420px;font-size:12px;color:#333">Animations</span>
<div class="a" style="left:540px;top:414.5px;width:54.5px;height:23.6px;background:#fff;border:1px solid #ccc;border-bottom:none"></div>
<span class="t" style="left:545px;top:420px;font-size:12px;color:#222">Console</span>
<span class="t" style="left:600px;top:420px;font-size:12px;color:#333">What's New</span>
<span class="t" style="left:690px;top:420px;font-size:12px;color:#333">Remote devices</span>
<span class="t" style="left:801.7px;top:420px;font-size:12px;color:#333">Sensors</span>
<span class="t" style="left:870.5px;top:420px;font-size:12px;color:#333">Search</span>
<svg class="a" style="left:1176.6px;top:419.3px" width="12" height="12" viewBox="0 0 12 12"><path d="M1.2 1.2 L10.4 10.4 M10.4 1.2 L1.2 10.4" stroke="#444" stroke-width="1.5" fill="none"/></svg>
<div class="a" style="left:421.5px;top:438.5px;width:776px;height:27px;background:#fff;border-bottom:1px solid #d4d4d4"></div>
<svg class="a" style="left:431px;top:445px" width="15" height="15" viewBox="0 0 15 15"><circle cx="7.5" cy="7.2" r="5.5" fill="none" stroke="#444" stroke-width="1.6"/><path d="M3.7 3.4 L11.3 11" stroke="#444" stroke-width="1.6"/></svg>
<div class="a" style="left:456px;top:444px;width:1px;height:16px;background:#ccc"></div>
<span class="t" style="left:466px;top:446px;font-size:12px;color:#333">top</span>
<svg class="a" style="left:586.5px;top:448.3px" width="8" height="7" viewBox="0 0 8 7"><path d="M0.2 0.2 H7.6 L3.9 6.8Z" fill="#555"/></svg>
<div class="a" style="left:603px;top:444px;width:1px;height:16px;background:#ccc"></div>
<div class="a" style="left:610.5px;top:442px;width:181px;height:19.5px;background:#fff;border:1px solid #ccc"></div>
<span class="t" style="left:616px;top:446px;font-size:12px;color:#8a8a8a">Filter</span>
<span class="t" style="left:800px;top:446px;font-size:12px;color:#333">All levels</span>
<svg class="a" style="left:852px;top:448.3px" width="8" height="7" viewBox="0 0 8 7"><path d="M0.2 0.2 H7.6 L3.9 6.8Z" fill="#555"/></svg>
<svg class="a" style="left:1174.7px;top:444px" width="16" height="16" viewBox="0 0 16 16"><g transform="translate(8 8)"><g fill="#484848"><rect x="-2.3" y="-6.9" width="4.6" height="4" rx=".5" transform="rotate(0)"/><rect x="-2.3" y="-6.9" width="4.6" height="4" rx=".5" transform="rotate(60)"/><rect x="-2.3" y="-6.9" width="4.6" height="4" rx=".5" transform="rotate(120)"/><rect x="-2.3" y="-6.9" width="4.6" height="4" rx=".5" transform="rotate(180)"/><rect x="-2.3" y="-6.9" width="4.6" height="4" rx=".5" transform="rotate(240)"/><rect x="-2.3" y="-6.9" width="4.6" height="4" rx=".5" transform="rotate(300)"/></g><circle r="5.1" fill="#484848"/><circle r="2.2" fill="#fff"/></g></svg>
<div class="a" style="left:421.5px;top:466px;width:763px;height:237px;background:#fff"></div>
<pre class="cm" style="left:446.3px;top:470.3px">gotoCowAdd</pre>
<pre class="cm lk" style="right:42.5px;top:470.3px">index.js?5c2a:692</pre>
<div class="a" style="left:422px;top:485.6px;width:762.5px;height:1px;background:#efefef"></div>
<pre class="cm" style="left:446.3px;top:489.7px">bindDeviceCowGetDeviceCode: type=2,deviceCode=888888888888888,cowCode=</pre>
<pre class="cm lk" style="right:42.5px;top:489.7px">index.js?8d51:82</pre>
<div class="a" style="left:422px;top:504.8px;width:762.5px;height:1px;background:#efefef"></div>
<pre class="cm" style="left:446.3px;top:508.9px">App handleRoute e.url=/uapp/cowEditAdd/2//DEVICE_BIND_COW/888888888888888</pre>
<pre class="cm lk" style="right:42.5px;top:508.9px">VM66657:167</pre>
<div class="a" style="left:422px;top:524.1px;width:762.5px;height:1px;background:#efefef"></div>
<pre class="cm" style="left:446.3px;top:527.9px"><b class="hl">CowEditAdd constructor</b>:</pre>
<pre class="cm" style="left:446.3px;top:541.9px">type=2,id=,caller=DEVICE_BIND_COW,callerPara1=888888888888888,callerPara2=</pre>
<pre class="cm lk" style="right:42.5px;top:527.9px">index.js?284f:94</pre>
<div class="a" style="left:422px;top:556.4px;width:762.5px;height:1px;background:#efefef"></div>
<pre class="cm" style="left:446.3px;top:560.7px">INITIAL fetch: path=/dict/dict/cowshedList,params={}</pre>
<pre class="cm lk" style="right:42.5px;top:560.7px">store.js?adc6:63</pre>
<div class="a" style="left:422px;top:575.4px;width:762.5px;height:1px;background:#efefef"></div>
<pre class="cm" style="left:446.3px;top:579.7px">after added Authorization: path=/dict/dict/cowshedList, params={"headers":</pre>
<pre class="cm" style="left:446.3px;top:593.7px">{"Authorization":"Bearer fb32ef8469f14d279fad66105421838b_1"}}</pre>
<pre class="cm lk" style="right:42.5px;top:579.7px">store.js?adc6:84</pre>
<div class="a" style="left:422px;top:608.3px;width:762.5px;height:1px;background:#efefef"></div>
<pre class="cm" style="left:446.3px;top:612.9px">/dict/dict/fanzhiStatusList</pre>
<pre class="cm lk" style="right:42.5px;top:612.9px">index.js?284f:234</pre>
<div class="a" style="left:422px;top:627.8px;width:762.5px;height:1px;background:#efefef"></div>
<pre class="cm" style="left:446.3px;top:631.5px">INITIAL fetch: path=/dict/dict/fanzhiStatusList,params={}</pre>
<pre class="cm lk" style="right:42.5px;top:631.5px">store.js?adc6:63</pre>
<div class="a" style="left:422px;top:646.1px;width:762.5px;height:1px;background:#efefef"></div>
<pre class="cm" style="left:446.3px;top:650.5px">after added Authorization: path=/dict/dict/fanzhiStatusList, params={"headers":</pre>
<pre class="cm" style="left:446.3px;top:664.5px">{"Authorization":"Bearer fb32ef8469f14d279fad66105421838b_1"}}</pre>
<pre class="cm lk" style="right:42.5px;top:650.5px">store.js?adc6:84</pre>
<div class="a" style="left:422px;top:679.6px;width:762.5px;height:1px;background:#efefef"></div>
<pre class="cm" style="left:446.3px;top:683.9px">updateSaveButtonStatus: button enabled =false</pre>
<pre class="cm lk" style="right:42.5px;top:683.9px">index.js?284f:345</pre>
<div class="a" style="left:422px;top:699.3px;width:762.5px;height:1px;background:#efefef"></div>
<div class="a" style="left:1183.7px;top:466px;width:13.3px;height:237px;background:#fafafa;border-left:1px solid #e4e4e4"></div>
<div class="a" style="left:1187.5px;top:469px;width:7.5px;height:16.5px;background:#b5b5b5;border-radius:3.75px"></div>
<div class="a" style="left:421.5px;top:702.5px;width:763px;height:13px;background:#fafafa;border-top:1px solid #ececec"></div>
<div class="a" style="left:1184.5px;top:702.5px;width:12.5px;height:13px;background:#fff"></div>
<div class="a" style="left:425px;top:705.3px;width:210px;height:7.5px;background:#c1c1c1;border-radius:3.75px"></div>
<div class="a" style="left:421.5px;top:715.5px;width:776px;height:25px;background:#f3f3f3;border-top:1px solid #ccc"></div>
<span class="t" style="left:431px;top:721px;font-size:12px;font-weight:bold;color:#333;letter-spacing:-.3px">Aa</span>
<span class="t" style="left:462px;top:720px;font-size:12px;font-weight:bold;color:#333">.*</span>
<div class="a" style="left:484.5px;top:718.5px;width:590px;height:18.5px;background:#fff;border:1px solid #aaa;border-radius:2px 0 0 2px"></div>
<span class="t" style="left:489.4px;top:720.7px;font-size:12px;color:#222;letter-spacing:.13px">CowEditAdd constructor</span>
<span class="t" style="left:1036.5px;top:720.7px;font-size:12px;color:#999">1 of 1</span>
<div class="a" style="left:1071.5px;top:718.5px;width:35px;height:18.5px;background:linear-gradient(#e4e4e4,#cfcfcf);border:1px solid #aaa;border-radius:0 2px 2px 0"></div>
<div class="a" style="left:1088.5px;top:719.5px;width:1px;height:16.5px;background:#b0b0b0"></div>
<svg class="a" style="left:1075.5px;top:724px" width="10" height="8" viewBox="0 0 10 8"><path d="M1.4 6 L5 2.4 L8.6 6" fill="none" stroke="#222" stroke-width="1.8"/></svg>
<svg class="a" style="left:1092.5px;top:724px" width="10" height="8" viewBox="0 0 10 8"><path d="M1.4 2 L5 5.6 L8.6 2" fill="none" stroke="#222" stroke-width="1.8"/></svg>
<div class="a" style="left:1118.5px;top:717.7px;width:74.5px;height:19px;background:linear-gradient(#fafafa,#e4e4e4);border:1px solid #989898;border-radius:10px"></div>
<span class="t" style="left:1137px;top:721px;font-size:12px;color:#222">Cancel</span>
<div class="a" style="left:1160px;top:411.5px;width:37px;height:54px;background:linear-gradient(90deg,rgba(0,0,0,0),rgba(0,0,0,.06))"></div>
<!--SECTIONS-->
</body>
</html>
